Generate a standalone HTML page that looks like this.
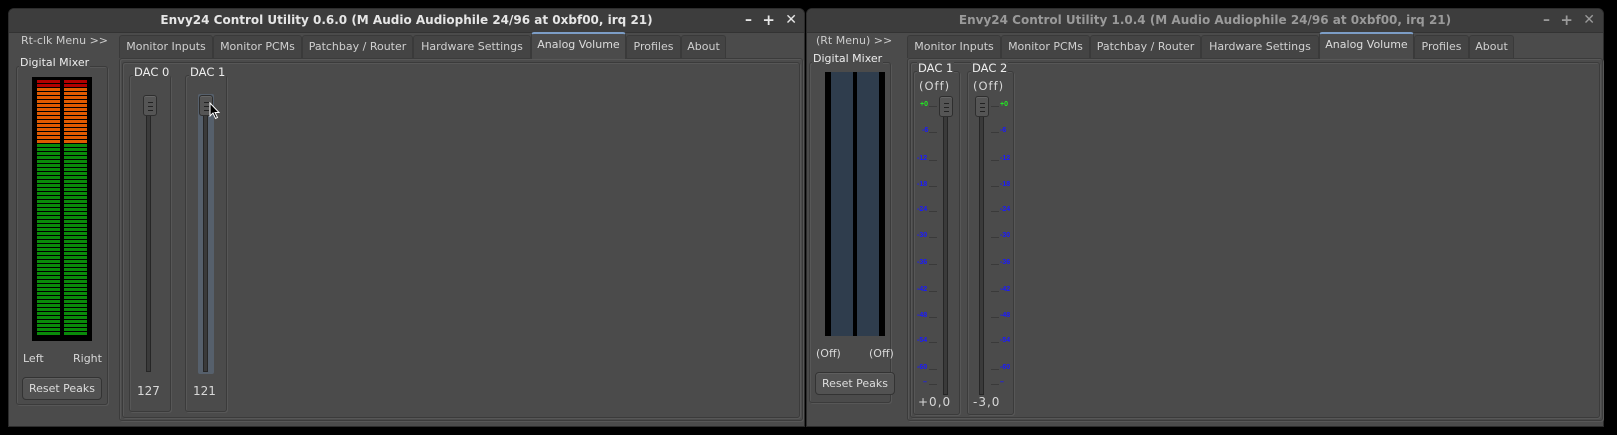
<!DOCTYPE html>
<html><head><meta charset="utf-8"><style>
*{margin:0;padding:0;box-sizing:border-box}
body{width:1617px;height:435px;background:#000;position:relative;overflow:hidden;font-family:"DejaVu Sans","Liberation Sans",sans-serif;font-size:11px;color:#d8d8d8}
.a{position:absolute}
.win{position:absolute;background:#4b4b4b;border-radius:6px 6px 0 0;border:1px solid #2c2c2c}
.tb{position:absolute;left:0;right:0;top:0;height:24px;background:#3d3d3d;border-radius:6px 6px 0 0;border-bottom:1px solid #333;font-weight:bold;font-size:12px;text-align:center;line-height:22px}
.fr{position:absolute;border:1px solid #3b3b3b;border-radius:3px;box-shadow:inset 1px 1px 0 #575757,1px 1px 0 #575757}
.tab{position:absolute;top:35px;height:23px;background:#444;border:1px solid #3a3a3a;border-bottom:none;border-radius:3px 3px 0 0;line-height:21px;text-align:center;color:#d0d0d0}
.tab.on{top:32px;height:27px;background:#4b4b4b;border-top:2px solid #7c9dc6;color:#ddd;line-height:22px}
.btn{position:absolute;height:23px;border:1px solid #333;border-radius:4px;background:#525252;box-shadow:inset 0 1px 0 #5e5e5e;text-align:center;line-height:21px;color:#ddd}
.lbl{position:absolute;background:#4b4b4b;padding:0 1px;white-space:nowrap}
.hdl{position:absolute;width:14px;height:21px;border:1px solid #2e2e2e;border-radius:3px;background:#555;box-shadow:inset 0 1px 0 #666}
.hdl:after{content:"";position:absolute;left:4px;top:6px;width:5px;height:7px;border-top:1px solid #222;border-bottom:1px solid #222;background:linear-gradient(#222,#222) 0 3px/5px 1px no-repeat}
.trk{position:absolute;width:5px;background:#3a3a3a;border:1px solid #262626}
.col{position:absolute;top:80px;width:23px;height:256px;background:repeating-linear-gradient(to bottom,transparent 0 3px,#000 3px 4px),linear-gradient(to bottom,#b00000 0 8px,#e05a00 8px 64px,#0a8a0a 64px)}
.sc{position:absolute;font-size:7px;font-weight:bold;color:#1a1aff;white-space:nowrap;font-family:"Liberation Sans",sans-serif}
.tk{position:absolute;height:1px;width:8px;background:#3a3a3a}
</style></head><body>

<!-- LEFT WINDOW -->
<div class="win" style="left:8px;top:8px;width:797px;height:419px">
 <div class="tb" style="color:#e6e6e6">Envy24 Control Utility 0.6.0 (M Audio Audiophile 24/96 at 0xbf00, irq 21)
  <span class="a" style="right:52px;top:0;font-size:14px">–</span><span class="a" style="right:29px;top:0;font-size:15px">+</span><span class="a" style="right:7px;top:0;font-size:14px">✕</span></div>
</div>
<div class="a" style="left:21px;top:34px;color:#ccc">Rt-clk Menu &gt;&gt;</div>
<div class="fr" style="left:16px;top:66px;width:92px;height:339px"></div>
<div class="lbl" style="left:19px;top:56px;color:#eee">Digital Mixer</div>
<div class="a" style="left:32px;top:77px;width:60px;height:264px;background:#000"></div>
<div class="col" style="left:37px"></div><div class="col" style="left:64px"></div>
<div class="a" style="left:23px;top:352px">Left</div>
<div class="a" style="left:73px;top:352px">Right</div>
<div class="btn" style="left:22px;top:377px;width:80px">Reset Peaks</div>

<div class="fr" style="left:119px;top:58px;width:684px;height:363px"></div>
<div class="fr" style="left:122px;top:62px;width:678px;height:356px"></div>
<div class="tab" style="left:119px;width:94px">Monitor Inputs</div>
<div class="tab" style="left:213px;width:89px">Monitor PCMs</div>
<div class="tab" style="left:302px;width:111px">Patchbay / Router</div>
<div class="tab" style="left:413px;width:118px">Hardware Settings</div>
<div class="tab on" style="left:531px;width:95px">Analog Volume</div>
<div class="tab" style="left:626px;width:55px">Profiles</div>
<div class="tab" style="left:681px;width:45px">About</div>

<div class="fr" style="left:129px;top:75px;width:42px;height:337px"></div>
<div class="lbl" style="left:133px;top:65px;font-size:11.5px;color:#eee">DAC 0</div>
<div class="trk" style="left:146px;top:112px;height:260px"></div>
<div class="hdl" style="left:143px;top:95px"></div>
<div class="a" style="left:137px;top:384px;font-size:12px">127</div>

<div class="fr" style="left:185px;top:75px;width:42px;height:337px"></div>
<div class="lbl" style="left:189px;top:65px;font-size:11.5px;color:#eee">DAC 1</div>
<div class="a" style="left:198px;top:94px;width:16px;height:280px;background:#56606c;border-radius:2px"></div>
<div class="trk" style="left:203px;top:112px;height:260px"></div>
<div class="hdl" style="left:199px;top:95px"></div>
<div class="a" style="left:193px;top:384px;font-size:12px">121</div>
<svg class="a" style="left:209px;top:102px" width="12" height="18" viewBox="0 0 12 18"><path d="M1 1 L1 14 L4 11 L6.5 16.5 L8.5 15.5 L6 10.5 L10 10.5 Z" fill="#000" stroke="#fff" stroke-width="1"/></svg>

<!-- RIGHT WINDOW -->
<div class="win" style="left:806px;top:8px;width:798px;height:419px">
 <div class="tb" style="color:#9a9a9a">Envy24 Control Utility 1.0.4 (M Audio Audiophile 24/96 at 0xbf00, irq 21)
  <span class="a" style="right:53px;top:0;font-size:14px">–</span><span class="a" style="right:30px;top:0;font-size:15px">+</span><span class="a" style="right:8px;top:0;font-size:14px">✕</span></div>
</div>
<div class="a" style="left:816px;top:34px;color:#ccc">(Rt Menu) &gt;&gt;</div>
<div class="fr" style="left:809px;top:62px;width:82px;height:341px"></div>
<div class="lbl" style="left:812px;top:52px;color:#eee">Digital Mixer</div>
<div class="a" style="left:825px;top:72px;width:60px;height:264px;background:#000"></div>
<div class="a" style="left:831px;top:72px;width:22px;height:264px;background:#2f3d4d"></div>
<div class="a" style="left:857px;top:72px;width:22px;height:264px;background:#2f3d4d"></div>
<div class="a" style="left:816px;top:347px">(Off)</div>
<div class="a" style="left:869px;top:347px">(Off)</div>
<div class="btn" style="left:815px;top:372px;width:80px">Reset Peaks</div>

<div class="fr" style="left:907px;top:58px;width:696px;height:363px"></div>
<div class="fr" style="left:910px;top:62px;width:690px;height:356px"></div>
<div class="tab" style="left:907px;width:94px">Monitor Inputs</div>
<div class="tab" style="left:1001px;width:89px">Monitor PCMs</div>
<div class="tab" style="left:1090px;width:111px">Patchbay / Router</div>
<div class="tab" style="left:1201px;width:118px">Hardware Settings</div>
<div class="tab on" style="left:1319px;width:95px">Analog Volume</div>
<div class="tab" style="left:1414px;width:55px">Profiles</div>
<div class="tab" style="left:1469px;width:45px">About</div>

<div class="fr" style="left:913px;top:71px;width:47px;height:344px"></div>
<div class="lbl" style="left:917px;top:61px;font-size:11.5px;color:#eee">DAC 1</div>
<div class="a" style="left:919px;top:79px;font-size:11.5px;letter-spacing:1px">(Off)</div>
<div class="trk" style="left:943px;top:114px;height:281px"></div>
<div class="hdl" style="left:939px;top:96px"></div>
<div class="a" style="left:918px;top:395px;font-size:12px;letter-spacing:1px">+0,0</div>

<div class="fr" style="left:967px;top:71px;width:47px;height:344px"></div>
<div class="lbl" style="left:971px;top:61px;font-size:11.5px;color:#eee">DAC 2</div>
<div class="a" style="left:973px;top:79px;font-size:11.5px;letter-spacing:1px">(Off)</div>
<div class="trk" style="left:979px;top:114px;height:281px"></div>
<div class="hdl" style="left:975px;top:96px"></div>
<div class="a" style="left:973px;top:395px;font-size:12px;letter-spacing:1px">-3,0</div>

<div class="sc" style="left:920px;top:101px;color:#22ee22">+0</div><div class="tk" style="left:929px;top:106px"></div><div class="tk" style="left:991px;top:106px"></div><div class="sc" style="left:1000px;top:101px;color:#22ee22">+0</div>
<div class="sc" style="left:922px;top:127px">-6</div><div class="tk" style="left:929px;top:132px"></div><div class="tk" style="left:991px;top:132px"></div><div class="sc" style="left:1000px;top:127px">-6</div>
<div class="sc" style="left:917px;top:155px">-12</div><div class="tk" style="left:929px;top:160px"></div><div class="tk" style="left:991px;top:160px"></div><div class="sc" style="left:1000px;top:155px">-12</div>
<div class="sc" style="left:917px;top:181px">-18</div><div class="tk" style="left:929px;top:186px"></div><div class="tk" style="left:991px;top:186px"></div><div class="sc" style="left:1000px;top:181px">-18</div>
<div class="sc" style="left:917px;top:206px">-24</div><div class="tk" style="left:929px;top:211px"></div><div class="tk" style="left:991px;top:211px"></div><div class="sc" style="left:1000px;top:206px">-24</div>
<div class="sc" style="left:917px;top:232px">-30</div><div class="tk" style="left:929px;top:237px"></div><div class="tk" style="left:991px;top:237px"></div><div class="sc" style="left:1000px;top:232px">-30</div>
<div class="sc" style="left:917px;top:259px">-36</div><div class="tk" style="left:929px;top:264px"></div><div class="tk" style="left:991px;top:264px"></div><div class="sc" style="left:1000px;top:259px">-36</div>
<div class="sc" style="left:917px;top:286px">-42</div><div class="tk" style="left:929px;top:291px"></div><div class="tk" style="left:991px;top:291px"></div><div class="sc" style="left:1000px;top:286px">-42</div>
<div class="sc" style="left:917px;top:312px">-48</div><div class="tk" style="left:929px;top:317px"></div><div class="tk" style="left:991px;top:317px"></div><div class="sc" style="left:1000px;top:312px">-48</div>
<div class="sc" style="left:917px;top:337px">-54</div><div class="tk" style="left:929px;top:342px"></div><div class="tk" style="left:991px;top:342px"></div><div class="sc" style="left:1000px;top:337px">-54</div>
<div class="sc" style="left:917px;top:364px">-60</div><div class="tk" style="left:929px;top:369px"></div><div class="tk" style="left:991px;top:369px"></div><div class="sc" style="left:1000px;top:364px">-60</div>
<div class="sc" style="left:923px;top:379px">–</div><div class="tk" style="left:929px;top:384px"></div><div class="tk" style="left:991px;top:384px"></div><div class="sc" style="left:1000px;top:379px">–</div>

</body></html>
